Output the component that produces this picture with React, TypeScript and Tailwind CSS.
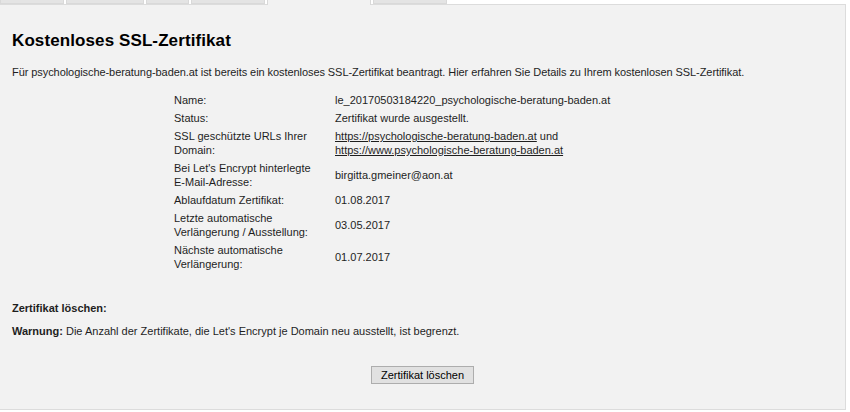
const tabs = [
  { w: 64, active: false },
  { w: 78, active: false },
  { w: 43, active: false },
  { w: 74, active: false },
  { w: 104, active: true },
  { w: 74, active: false },
];

const rows: { label: string[]; value: React.ReactNode }[] = [
  { label: ["Name:"], value: "le_20170503184220_psychologische-beratung-baden.at" },
  { label: ["Status:"], value: "Zertifikat wurde ausgestellt." },
  {
    label: ["SSL geschützte URLs Ihrer", "Domain:"],
    value: (
      <>
        <a href="#" className="underline">https://psychologische-beratung-baden.at</a> und
        <br />
        <a href="#" className="underline">https://www.psychologische-beratung-baden.at</a>
      </>
    ),
  },
  { label: ["Bei Let's Encrypt hinterlegte", "E-Mail-Adresse:"], value: "birgitta.gmeiner@aon.at" },
  { label: ["Ablaufdatum Zertifikat:"], value: "01.08.2017" },
  { label: ["Letzte automatische", "Verlängerung / Ausstellung:"], value: "03.05.2017" },
  { label: ["Nächste automatische", "Verlängerung:"], value: "01.07.2017" },
];

export default function App() {
  return (
    <div
      className="w-[850px] h-[412px] bg-white text-[#1e1e1e] overflow-hidden"
      style={{ fontFamily: '"Liberation Sans", Arial, sans-serif' }}
    >
      {/* Tabs */}
      <div className="flex h-[4px] gap-[2px] relative z-10">
        {tabs.map((t, i) => (
          <div
            key={i}
            style={{ width: t.w }}
            className={
              t.active
                ? "h-[5px] bg-[#f2f2f2] border-x border-[#d9d9d9]"
                : "h-[4px] bg-[#e4e4e4] border-x border-b border-[#d9d9d9]"
            }
          />
        ))}
      </div>

      {/* Panel */}
      <div className="w-[846px] h-[406px] bg-[#f2f2f2] border-t border-r border-b border-[#dcdcdc] px-3">
        <h1 className="mt-[26px] text-[17px] leading-[20px] font-bold text-black tracking-[0.1px]">
          Kostenloses SSL-Zertifikat
        </h1>
        <p className="mt-[14px] text-[11px] leading-[14px] tracking-[-0.07px]">
          Für psychologische-beratung-baden.at ist bereits ein kostenloses SSL-Zertifikat beantragt. Hier erfahren Sie
          Details zu Ihrem kostenlosen SSL-Zertifikat.
        </p>

        <table className="mt-[12px] ml-[162px] text-[11px] leading-[14px] border-collapse">
          <tbody>
            {rows.map((r, i) => (
              <tr key={i}>
                <td className="w-[161px] py-[2px] px-0 align-middle">
                  {r.label.map((l, j) => (
                    <div key={j}>{l}</div>
                  ))}
                </td>
                <td className="py-[2px] px-0 align-middle">{r.value}</td>
              </tr>
            ))}
          </tbody>
        </table>

        <div className="mt-[28px] text-[11px] leading-[14px] font-bold">Zertifikat löschen:</div>
        <p className="mt-[9px] text-[11px] leading-[14px]">
          <span className="font-bold">Warnung:</span> Die Anzahl der Zertifikate, die Let's Encrypt je Domain neu
          ausstellt, ist begrenzt.
        </p>

        <div className="mt-[28px] flex justify-center">
          <button className="h-[18px] px-[9px] bg-[#e1e1e1] border border-[#adadad] text-[11px] leading-[14px] text-black">
            Zertifikat löschen
          </button>
        </div>
      </div>
    </div>
  );
}
